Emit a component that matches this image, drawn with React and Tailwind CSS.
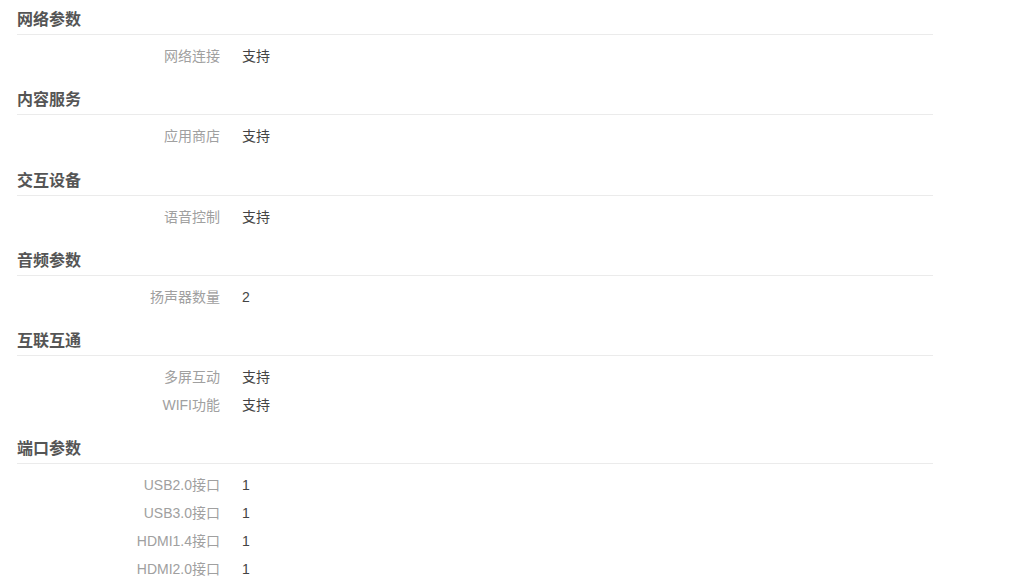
const SECTIONS = [
  { title: '网络参数', rows: [['网络连接', '支持']] },
  { title: '内容服务', rows: [['应用商店', '支持']] },
  { title: '交互设备', rows: [['语音控制', '支持']] },
  { title: '音频参数', rows: [['扬声器数量', '2']] },
  { title: '互联互通', rows: [['多屏互动', '支持'], ['WIFI功能', '支持']] },
  {
    title: '端口参数',
    rows: [
      ['USB2.0接口', '1'],
      ['USB3.0接口', '1'],
      ['HDMI1.4接口', '1'],
      ['HDMI2.0接口', '1'],
    ],
  },
];

function Section({ title, rows }) {
  return (
    <div className="pb-[9.8px]">
      <h3 className="pt-[8px] pb-[2px] text-[16px] leading-6 font-bold text-[#555] border-b border-[#ebebeb]">
        {title}
      </h3>
      <div className="pt-[7.5px]">
        {rows.map(([label, value]) => (
          <div key={label} className="flex h-[28px] items-center text-[14px]">
            <span className="w-[203px] text-right text-[#a0a0a0]">{label}</span>
            <span className="ml-[22px] text-[#444]">{value}</span>
          </div>
        ))}
      </div>
    </div>
  );
}

export default function App() {
  return (
    <div
      className="min-h-screen bg-white"
      style={{ fontFamily: '"Liberation Sans", "Noto Sans CJK SC", sans-serif' }}
    >
      <div className="ml-[17px] w-[916px]">
        {SECTIONS.map((s) => (
          <Section key={s.title} {...s} />
        ))}
      </div>
    </div>
  );
}
